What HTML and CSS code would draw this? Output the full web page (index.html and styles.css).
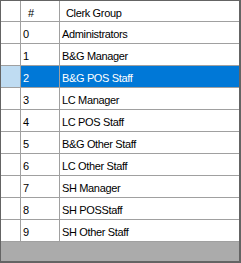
FILE: index.html
```html
<!DOCTYPE html>
<html>
<head>
<meta charset="utf-8">
<link rel="stylesheet" href="styles.css">
</head>
<body>
<div class="grid">
  <div class="row head">
    <div class="rh"></div>
    <div class="cell num">#</div>
    <div class="cell name">Clerk Group</div>
  </div>
  <div class="row"><div class="rh"></div><div class="cell num">0</div><div class="cell name">Administrators</div></div>
  <div class="row"><div class="rh"></div><div class="cell num">1</div><div class="cell name">B&amp;G Manager</div></div>
  <div class="row sel"><div class="rh"></div><div class="cell num">2</div><div class="cell name">B&amp;G POS Staff</div></div>
  <div class="row"><div class="rh"></div><div class="cell num">3</div><div class="cell name">LC Manager</div></div>
  <div class="row"><div class="rh"></div><div class="cell num">4</div><div class="cell name">LC POS Staff</div></div>
  <div class="row"><div class="rh"></div><div class="cell num">5</div><div class="cell name">B&amp;G Other Staff</div></div>
  <div class="row"><div class="rh"></div><div class="cell num">6</div><div class="cell name">LC Other Staff</div></div>
  <div class="row"><div class="rh"></div><div class="cell num">7</div><div class="cell name">SH Manager</div></div>
  <div class="row"><div class="rh"></div><div class="cell num">8</div><div class="cell name">SH POSStaff</div></div>
  <div class="row"><div class="rh"></div><div class="cell num">9</div><div class="cell name">SH Other Staff</div></div>
  <div class="empty"></div>
</div>
</body>
</html>
```

FILE: styles.css
```css
html, body {
  margin: 0;
  padding: 0;
  background: #ffffff;
}

.grid {
  width: 241px;
  height: 263px;
  box-sizing: border-box;
  border-left: 1px solid #646464;
  border-top: 1px solid #646464;
  border-right: 2px solid #646464;
  border-bottom: 2px solid #646464;
  background: #ababab;
  display: flex;
  flex-direction: column;
  font-family: "Liberation Sans", Arial, sans-serif;
  font-size: 11px;
  letter-spacing: -0.35px;
  color: #000000;
}

.row {
  display: grid;
  grid-template-columns: 20px 39px 1fr;
  height: 22px;
  background: #ffffff;
}

.row.head {
  height: 21px;
}

.rh,
.cell {
  box-sizing: border-box;
  border-bottom: 1px solid #a0a0a0;
  white-space: nowrap;
  overflow: hidden;
}

.rh,
.num {
  border-right: 1px solid #a0a0a0;
}

.cell {
  line-height: 21px;
  padding-top: 2px;
  padding-left: 2px;
}

.head .cell {
  line-height: 20px;
  padding-top: 2px;
  padding-left: 6px;
}

.head .num {
  padding-left: 7px;
}

.sel .rh {
  background: #bfdcf2;
}

.sel .cell {
  background: #0078d7;
  color: #ffffff;
}

.empty {
  flex: 1;
}
```
